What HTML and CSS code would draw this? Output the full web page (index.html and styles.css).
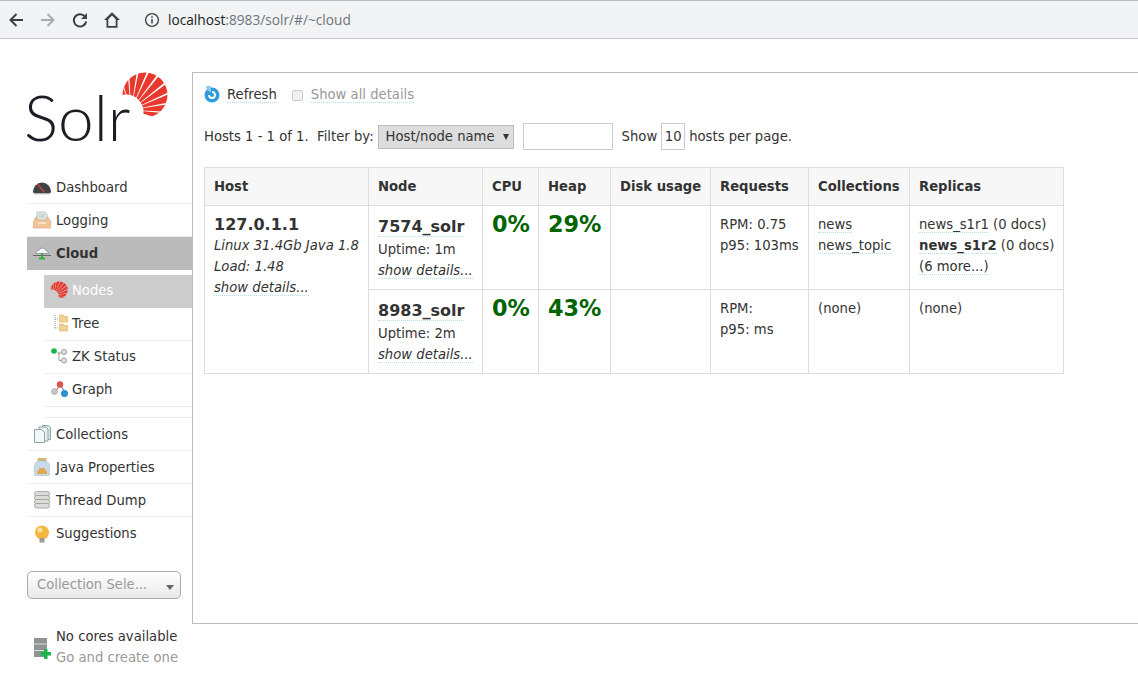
FILE: index.html
```html
<!DOCTYPE html>
<html lang="en">
<head>
<meta charset="utf-8">
<title>Solr Admin</title>
<link rel="stylesheet" href="styles.css">
</head>
<body>
<header class="chrome">
  <svg class="nav-ic" viewBox="0 0 16 16"><path d="M15 8H2.500M8.500 2 2.500 8l6 6" fill="none" stroke="#3c4043" stroke-width="2"/></svg>
  <svg class="nav-ic" viewBox="0 0 16 16"><path d="M1 8h12.500M7.500 2l6 6-6 6" fill="none" stroke="#a9abae" stroke-width="2"/></svg>
  <svg class="nav-ic" viewBox="0 0 16 16"><path d="M13.300 5A6.200 6.200 0 1 0 14.200 9.500" fill="none" stroke="#3c4043" stroke-width="2"/><path d="M15 1v6H9z" fill="#3c4043"/></svg>
  <svg class="nav-ic" viewBox="0 0 16 16"><path d="M8 .2 0 8h2.500v7.800h11V8H16zM4.300 14V7.200L8 3.400l3.700 3.800V14z" fill="#3c4043" fill-rule="evenodd"/></svg>
  <div class="omnibox">
    <svg class="info" viewBox="0 0 16 16"><circle cx="8" cy="8" r="6.400" fill="none" stroke="#3c4043" stroke-width="1.400"/><path d="M8 7v4.500M8 4.200v1.600" stroke="#3c4043" stroke-width="1.500"/></svg>
    <span class="host">localhost</span><span class="rest">:8983/solr/#/~cloud</span>
  </div>
</header>
<div class="page">
  <aside class="side">
    <div class="logo">
      <span class="logo-word">Solr</span>
      <svg class="logo-sun" viewBox="0 0 47 47">
        <defs>
          <clipPath id="sun-clip"><circle cx="24" cy="23" r="22.500"/></clipPath>
          <mask id="sun-mask" maskUnits="userSpaceOnUse" x="0" y="0" width="47" height="47"><rect width="47" height="47" fill="#fff"/><circle cx="5" cy="40" r="17.500" fill="#000"/></mask>
        </defs>
        <g id="sun" clip-path="url(#sun-clip)">
          <g mask="url(#sun-mask)">
            <g fill="#e8392e" transform="translate(-4 -2)">
              <path d="M14 40-16-12-5.900-17z"/>
              <path d="M14 40-3.200-17.500 8.500-19.800z"/>
              <path d="M14 40 11.200-19.900 23.100-19.300z"/>
              <path d="M14 40 25.700-18.900 37.100-15.300z"/>
              <path d="M14 40 39.700-14.300 49.800-8.100z"/>
              <path d="M14 40 52-6.400 60.300 2z"/>
              <path d="M14 40 62.200 4.200 68.200 14.300z"/>
              <path d="M14 40 69.500 16.800 72.700 28.200z"/>
              <path d="M14 40 73.400 30.900 73.900 42.800z"/>
              <path d="M14 40 73.800 45.500 71.300 57.200z"/>
            </g>
          </g>
        </g>
      </svg>
    </div>
    <nav class="menu">
      <a class="item"><svg class="ic" viewBox="0 0 18 18"><path d="M0 13.500a9 9 0 0 1 18 0q0 2-2 2H2q-2 0-2-2z" fill="#3f4246"/><path d="M4.500 6l7 8.500" stroke="#d8433a" stroke-width="1.200"/><path d="M1 16.200h16" stroke="#ddd"/></svg>Dashboard</a>
      <a class="item"><svg class="ic" viewBox="0 0 18 18"><path d="M4 1h8l2 2v7H4z" fill="#dfe9e6" stroke="#a9b8b5" stroke-width=".7"/><path d="M6 4h6M6 6h6" stroke="#b9c8c5"/><path d="M3 6h1v3h10V6h1l3 5v6H0v-6z" fill="#f2c49a" stroke="#d2a47a" stroke-width=".6"/><path d="M5 11h8v2H5z" fill="#fae0c6"/></svg>Logging</a>
      <a class="item active"><svg class="ic" viewBox="0 0 18 18"><path d="M2.500 9.500q.3-3 3-3 1-2.500 4-2.500 3 .2 3.500 2.700 2.500.2 2.500 2.800z" fill="#f4f6f7" stroke="#7d8285" stroke-width=".7"/><path d="M0 11.500h18" stroke="#666"/><path d="M9 9v5" stroke="#2e9e2e" stroke-width="1.500"/><path d="M6 14.500h6" stroke="#2eae2e" stroke-width="2"/></svg>Cloud</a>
      <div class="sub">
        <a class="item subitem current"><svg class="ic" viewBox="0 0 47 47"><use href="#sun"/></svg>Nodes</a>
        <a class="item subitem"><svg class="ic" viewBox="0 0 18 18"><path d="M5 1v14M5 5h4M5 14h4" stroke="#999" stroke-dasharray="1 1" fill="none"/><path d="M9.500 1h4l1 1.500H18V8H9.500z" fill="#f3d08f" stroke="#d8b576" stroke-width=".6"/><path d="M9.500 10h4l1 1.500H18V17H9.500z" fill="#f3d08f" stroke="#d8b576" stroke-width=".6"/></svg>Tree</a>
        <a class="item subitem"><svg class="ic" viewBox="0 0 18 18"><circle cx="4" cy="4" r="2.800" fill="#14b84a"/><circle cx="14" cy="5" r="2.500" fill="#e4e4e4" stroke="#999"/><circle cx="14" cy="13.500" r="2.500" fill="#e4e4e4" stroke="#999"/><path d="M7 6h4M9 6v7.500h2.500" fill="none" stroke="#999"/></svg>ZK Status</a>
        <a class="item subitem"><svg class="ic" viewBox="0 0 18 18"><path d="M5 12 10 5l6 8" fill="none" stroke="#888" stroke-width="1.200"/><circle cx="10" cy="4.500" r="3.200" fill="#e0504a"/><circle cx="4.500" cy="11.500" r="3" fill="#c4c4c4" stroke="#999" stroke-width=".5"/><circle cx="14.500" cy="13.500" r="3.500" fill="#2b8fd0"/></svg>Graph</a>
      </div>
      <div class="group">
        <a class="item"><svg class="ic" viewBox="0 0 18 18"><path d="M9.500.5h6l2 2v12h-8z" fill="#dfe9e8" stroke="#8fa5a3"/><path d="M6 2h7l2 2v12H6z" fill="#e8f0ef" stroke="#8fa5a3"/><path d="M1.500 4.500h7l3 3v10h-10z" fill="#f3f7f6" stroke="#8fa5a3"/></svg>Collections</a>
        <a class="item"><svg class="ic" viewBox="0 0 18 18"><path d="M4.500 0h9v3h-9z" fill="#d8b878"/><path d="M4.500 3h9q3 2 3 5v8q0 2-2 2h-11q-2 0-2-2V8q0-3 3-5z" fill="#c6dbea" stroke="#a9bfcf" stroke-width=".6"/><path d="M6 10h6v2.500h2V16H4v-3.500h2z" fill="#e2a94f"/></svg>Java Properties</a>
        <a class="item"><svg class="ic" viewBox="0 0 18 18"><g fill="#dcdcd8" stroke="#999" stroke-width=".8"><rect x="1.500" y="0.500" width="15" height="4.500" rx="2"/><rect x="1.500" y="4.500" width="15" height="4.500" rx="2"/><rect x="1.500" y="8.500" width="15" height="4.500" rx="2"/><rect x="1.500" y="12.500" width="15" height="4.500" rx="2"/></g></svg>Thread Dump</a>
        <a class="item last"><svg class="ic" viewBox="0 0 18 18"><circle cx="9" cy="7.500" r="7" fill="#f4b63f"/><circle cx="7" cy="5" r="2.500" fill="#fbe3a6"/><path d="M6.500 13h5v4.500h-5z" fill="#9a9a96"/></svg>Suggestions</a>
      </div>
    </nav>
    <div class="picker">
      <span>Collection Sele...</span><i class="caret"></i>
    </div>
    <div class="cores">
      <svg class="core-ic" viewBox="0 0 18 22"><path d="M1 1h13v19H1z" fill="#8f9492"/><path d="M1 7h13M1 13.500h13" stroke="#dcdcdc"/><path d="M11 12h3.500v3H18v3.500h-3.500V22H11v-3.500H7.500V15H11z" fill="#19b34a"/></svg>
      <div class="core-text">
        <div class="core-title">No cores available</div>
        <div class="core-link">Go and create one</div>
      </div>
    </div>
  </aside>
  <main class="content">
    <div class="actions">
      <a class="refresh"><svg class="refresh-ic" viewBox="0 0 16 18"><circle cx="8" cy="10" r="7.500" fill="#2f9bdc"/><path d="M2 1h5v6H6L3 5z" fill="#8ccbef"/><path d="M8 7a3 3 0 1 1-3 3" fill="none" stroke="#fff" stroke-width="1.800"/></svg><span class="dotted">Refresh</span></a>
      <label class="details"><span class="box"></span><span class="dotted">Show all details</span></label>
    </div>
    <div class="filter">
      <span class="hosts">Hosts 1 - 1 of 1.&nbsp; Filter by:</span>
      <span class="select">Host/node name<i class="sel-caret"></i></span>
      <span class="input"></span>
      <span class="show">Show</span>
      <span class="perpage">10</span>
      <span>hosts per page.</span>
    </div>
    <table class="nodes">
      <colgroup>
        <col class="c1"><col class="c2"><col class="c3"><col class="c4"><col class="c5"><col class="c6"><col class="c7"><col class="c8">
      </colgroup>
      <thead>
        <tr><th>Host</th><th>Node</th><th>CPU</th><th>Heap</th><th>Disk usage</th><th>Requests</th><th>Collections</th><th>Replicas</th></tr>
      </thead>
      <tbody>
        <tr>
          <td rowspan="2">
            <div class="host-name">127.0.1.1</div>
            <div class="em">Linux 31.4Gb Java 1.8</div>
            <div class="em">Load: 1.48</div>
            <div class="em"><span class="dotted">show details...</span></div>
          </td>
          <td>
            <div class="node-name"><span class="dotted">7574_solr</span></div>
            <div>Uptime: 1m</div>
            <div class="em"><span class="dotted">show details...</span></div>
          </td>
          <td class="pct">0%</td>
          <td class="pct">29%</td>
          <td></td>
          <td><div>RPM: 0.75</div><div>p95: 103ms</div></td>
          <td><div><span class="dotted">news</span></div><div><span class="dotted">news_topic</span></div></td>
          <td>
            <div><span class="dotted">news_s1r1</span> (0 docs)</div>
            <div><b class="dotted">news_s1r2</b> (0 docs)</div>
            <div><span class="dotted">(6 more...)</span></div>
          </td>
        </tr>
        <tr>
          <td>
            <div class="node-name"><span class="dotted">8983_solr</span></div>
            <div>Uptime: 2m</div>
            <div class="em"><span class="dotted">show details...</span></div>
          </td>
          <td class="pct">0%</td>
          <td class="pct">43%</td>
          <td></td>
          <td><div>RPM:</div><div>p95: ms</div></td>
          <td>(none)</td>
          <td>(none)</td>
        </tr>
      </tbody>
    </table>
  </main>
</div>
</body>
</html>
```
FILE: styles.css
```css
* { box-sizing: border-box; }
html, body { margin: 0; height: 100%; overflow: hidden; }
body {
  background: #fff;
  color: #333;
  font-family: "DejaVu Sans", sans-serif;
  font-size: 13.2px;
}
.chrome {
  height: 39px;
  background: #f1f3f4;
  border-top: 1px solid #bdbdbd;
  border-bottom: 1px solid #c4c4c4;
  display: flex;
  align-items: center;
  padding-left: 8px;
  gap: 16px;
}
.nav-ic { width: 16px; height: 16px; flex: none; }
.omnibox {
  margin-left: 8px;
  flex: 1;
  height: 28px;
  border-radius: 14px 0 0 14px;
  background: #f1f3f4;
  display: flex;
  align-items: center;
  font-family: "Open Sans", sans-serif;
  font-size: 13.7px;
}
.info { width: 16px; height: 16px; margin: 0 8px 0 0; flex: none; }
.host { color: #202124; }
.rest { color: #70757a; }

.page {
  display: flex;
  align-items: flex-start;
  padding: 33px 0 0 27px;
}
.side { width: 165px; flex: none; }
.logo {
  height: 99px;
  position: relative;
}
.logo-word {
  position: absolute;
  left: -3px;
  top: 5px;
  font-family: "Lato", sans-serif;
  font-weight: 300;
  font-size: 64px;
  line-height: 80px;
  color: #1d1d26;
}
.logo-sun {
  position: absolute;
  left: 94px;
  top: 0;
  width: 47px;
  height: 47px;
}
.item {
  display: flex;
  align-items: center;
  height: 33px;
  border-bottom: 1px solid #eee;
  color: #333;
  padding-left: 6px;
  gap: 5px;
}
.item.last { border-bottom: 0; }
.ic { width: 18px; height: 18px; flex: none; }
.item.active {
  background: #bbb;
  font-weight: 700;
  border-bottom-color: #bbb;
}
.sub { margin: 5px 0 0 17px; padding-bottom: 10px; border-bottom: 1px solid #eee; }
.subitem { padding: 0 0 2px 6px; gap: 4px; }
.subitem.current { background: #ccc; color: #fff; border-bottom-color: #ccc; }

.picker {
  margin-top: 21px;
  width: 154px;
  height: 28px;
  border: 1px solid #aaa;
  border-radius: 5px;
  background: linear-gradient(#fff, #e9e9e9);
  color: #999;
  display: flex;
  align-items: center;
  justify-content: space-between;
  padding: 0 6px 2px 9px;
}
.caret {
  width: 0;
  height: 0;
  margin-top: 6px;
  border-left: 4.500px solid transparent;
  border-right: 4.500px solid transparent;
  border-top: 5px solid #666;
}
.cores {
  margin-top: 27px;
  display: flex;
  align-items: center;
  gap: 5px;
  padding-left: 6px;
}
.core-ic { width: 18px; height: 22px; flex: none; margin-top: 2px; }
.core-text { line-height: 21px; }
.core-title { color: #333; }
.core-link { color: #999; }

.content {
  flex: 1;
  height: 552px;
  border: 1px solid #bbb;
  border-right: 0;
  padding: 11px 0 0 11px;
}
.actions { display: flex; align-items: center; height: 22px; }
.refresh { display: flex; align-items: center; gap: 7px; }
.refresh-ic { width: 16px; height: 18px; margin-top: -3px; }
.details { display: flex; align-items: center; color: #999; margin-left: 15px; gap: 8px; }
.box {
  width: 11px;
  height: 11px;
  background: #f1f1f1;
  border: 1px solid #ccc;
  border-radius: 2px;
}
.dotted { border-bottom: 1px dotted #b5dcf2; }
.filter {
  margin-top: 17px;
  display: flex;
  align-items: center;
  height: 27px;
  white-space: nowrap;
}
.hosts { margin-right: 4px; }
.select {
  width: 136px;
  height: 24px;
  background: #ddd;
  border: 1px solid #bbb;
  padding-left: 7px;
  display: flex;
  align-items: center;
}
.sel-caret {
  margin-left: 8px;
  width: 0;
  height: 0;
  border-left: 3.500px solid transparent;
  border-right: 3.500px solid transparent;
  border-top: 6px solid #333;
}
.input {
  margin-left: 9px;
  width: 90px;
  height: 27px;
  border: 1px solid #ccc;
  background: #fff;
}
.show { margin-left: 9px; }
.perpage {
  margin: 0 4px;
  width: 24px;
  height: 27px;
  border: 1px solid #ccc;
  text-align: center;
  line-height: 25px;
}
.nodes {
  margin-top: 17px;
  border-collapse: collapse;
  table-layout: fixed;
  width: 860px;
  line-height: 21px;
}
.c1 { width: 164px; }
.c2 { width: 114px; }
.c3 { width: 56px; }
.c4 { width: 72px; }
.c5 { width: 100px; }
.c6 { width: 98px; }
.c7 { width: 101px; }
.c8 { width: 154px; }
.nodes th, .nodes td {
  border: 1px solid #ddd;
  padding: 8px 9px;
  text-align: left;
  vertical-align: top;
  white-space: nowrap;
}
.nodes th { background: #f7f7f7; height: 38px; font-weight: 700; }
.nodes td { height: 84px; }
.host-name { font-size: 16px; font-weight: 700; line-height: 21px; }
.node-name { font-size: 16px; font-weight: 700; line-height: 25px; }
.em { font-style: italic; }
.nodes td.pct {
  color: #006400;
  font-size: 22.300px;
  font-weight: 700;
  line-height: 20px;
}
```
